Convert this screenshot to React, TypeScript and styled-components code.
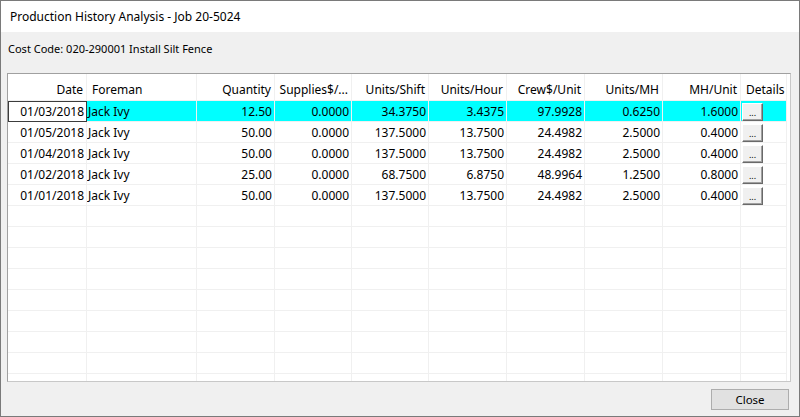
import React from "react";
import styled, { createGlobalStyle } from "styled-components";

const GlobalStyle = createGlobalStyle`
  html, body {
    margin: 0;
    padding: 0;
    background: #f0f0f0;
  }
  * {
    box-sizing: border-box;
  }
`;

const Window = styled.div`
  width: 800px;
  height: 417px;
  border: 1px solid #7a7a7a;
  display: flex;
  flex-direction: column;
  font-family: "Noto Sans", "Liberation Sans", sans-serif;
  color: #000;
  overflow: hidden;
`;

const TitleBar = styled.div`
  height: 31px;
  background: #fff;
  display: flex;
  align-items: center;
  padding-left: 9px;
  font-size: 12px;
`;

const Body = styled.div`
  flex: 1;
  background: #f0f0f0;
  display: flex;
  flex-direction: column;
  padding: 0 8px 0 6px;
`;

const CostCode = styled.div`
  height: 41px;
  display: flex;
  align-items: center;
  padding: 0 0 8px 1px;
  font-size: 11px;
`;

const Grid = styled.div`
  height: 309px;
  background: #fff;
  border: 1px solid #a0a0a0;
  border-right-color: #c8c8c8;
  border-bottom-color: #c8c8c8;
  overflow: hidden;
  font-size: 12px;
`;

const GridRow = styled.div<{ $header?: boolean }>`
  display: grid;
  grid-template-columns: 79px 110px 78px 77px 77px 78px 78px 78px 78px 46px;
  height: ${(p) => (p.$header ? "27px" : "21px")};
`;

const Cell = styled.div<{ $align?: string; $hl?: boolean; $focus?: boolean }>`
  display: flex;
  align-items: center;
  justify-content: ${(p) => p.$align || "flex-end"};
  padding: 1px 2px 0 1px;
  border-right: 1px solid #f0f0f0;
  border-bottom: 1px solid #f0f0f0;
  background: ${(p) => (p.$hl ? "#00ffff" : "#fff")};
  white-space: nowrap;
  overflow: hidden;
  ${(p) =>
    p.$focus
      ? "outline: 1px solid #3c3c3c; outline-offset: -1px; box-shadow: inset 1px 1px 0 #3c3c3c;"
      : ""}
`;

const HeaderCell = styled(Cell)`
  padding: 4px 3px 0 5px;
`;

const DotsButton = styled.button`
  width: 21px;
  height: 18px;
  margin-top: 1px;
  padding: 0 0 3px;
  border: 1px solid;
  border-color: #fff #696969 #696969 #fff;
  box-shadow: inset -1px -1px 0 #a0a0a0;
  background: #f0f0f0;
  font-family: "Noto Sans", sans-serif;
  font-size: 9px;
  line-height: 1;
  display: flex;
  align-items: flex-end;
  justify-content: center;
  color: #000;
`;

const Footer = styled.div`
  flex: 1;
  display: flex;
  justify-content: flex-end;
  align-items: flex-start;
  padding-top: 7px;
  padding-right: 2px;
`;

const CloseButton = styled.button`
  width: 78px;
  height: 21px;
  background: #e1e1e1;
  border: 1px solid #adadad;
  font-family: "Noto Sans", "Liberation Sans", sans-serif;
  font-size: 11.5px;
  color: #000;
  padding: 0;
`;

const headers = [
  { t: "Date", a: "flex-end" },
  { t: "Foreman", a: "flex-start" },
  { t: "Quantity", a: "flex-end" },
  { t: "Supplies$/...", a: "flex-end" },
  { t: "Units/Shift", a: "flex-end" },
  { t: "Units/Hour", a: "flex-end" },
  { t: "Crew$/Unit", a: "flex-end" },
  { t: "Units/MH", a: "flex-end" },
  { t: "MH/Unit", a: "flex-end" },
  { t: "Details", a: "flex-start" },
];

const rows = [
  ["01/03/2018", "Jack Ivy", "12.50", "0.0000", "34.3750", "3.4375", "97.9928", "0.6250", "1.6000"],
  ["01/05/2018", "Jack Ivy", "50.00", "0.0000", "137.5000", "13.7500", "24.4982", "2.5000", "0.4000"],
  ["01/04/2018", "Jack Ivy", "50.00", "0.0000", "137.5000", "13.7500", "24.4982", "2.5000", "0.4000"],
  ["01/02/2018", "Jack Ivy", "25.00", "0.0000", "68.7500", "6.8750", "48.9964", "1.2500", "0.8000"],
  ["01/01/2018", "Jack Ivy", "50.00", "0.0000", "137.5000", "13.7500", "24.4982", "2.5000", "0.4000"],
];

export default function App() {
  const empty = Array.from({ length: 10 });
  return (
    <>
      <GlobalStyle />
      <Window>
        <TitleBar>Production History Analysis - Job 20-5024</TitleBar>
        <Body>
          <CostCode>Cost Code: 020-290001 Install Silt Fence</CostCode>
          <Grid>
            <GridRow $header>
              {headers.map((h) => (
                <HeaderCell key={h.t} $align={h.a}>
                  {h.t}
                </HeaderCell>
              ))}
            </GridRow>
            {rows.map((r, i) => (
              <GridRow key={i}>
                {r.map((v, j) => (
                  <Cell
                    key={j}
                    $align={j === 1 ? "flex-start" : "flex-end"}
                    $hl={i === 0 && j > 0}
                    $focus={i === 0 && j === 0}
                  >
                    {v}
                  </Cell>
                ))}
                <Cell $align="flex-start" $hl={i === 0}>
                  <DotsButton>...</DotsButton>
                </Cell>
              </GridRow>
            ))}
            {empty.map((_, i) => (
              <GridRow key={"e" + i}>
                {headers.map((h) => (
                  <Cell key={h.t} />
                ))}
              </GridRow>
            ))}
          </Grid>
          <Footer>
            <CloseButton>Close</CloseButton>
          </Footer>
        </Body>
      </Window>
    </>
  );
}
